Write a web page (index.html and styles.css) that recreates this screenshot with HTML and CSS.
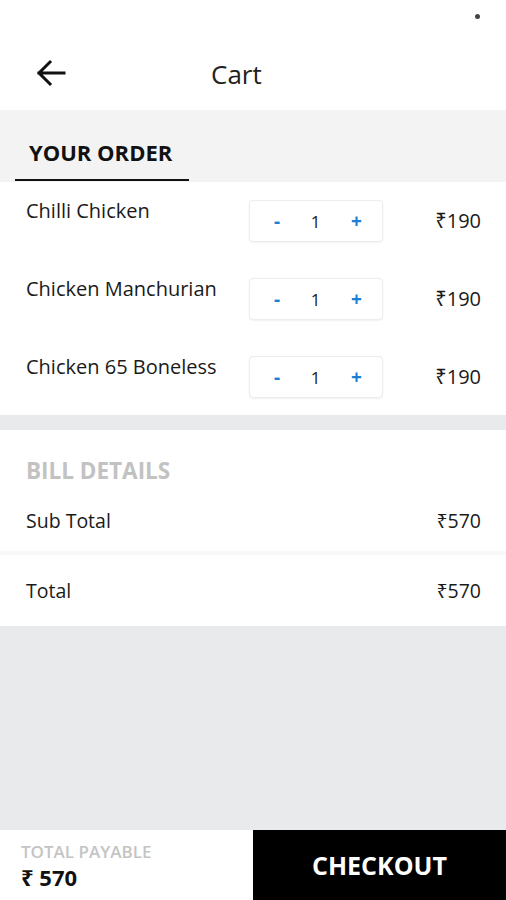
FILE: index.html
```html
<!DOCTYPE html>
<html lang="en">
<head>
    <meta charset="UTF-8">
    <meta name="viewport" content="width=device-width, initial-scale=1.0">
    <title>Cart</title>
    <link rel="stylesheet" href="styles.css">
</head>
<body>

<div class="app">
    <div class="status-bar">
        <span class="status-dot"></span>
    </div>

    <div class="header">
        <svg class="back" width="30" height="28" viewBox="0 0 30 28">
            <path d="M28 14 H3 M14 3 L3 14 L14 25" fill="none" stroke="#111" stroke-width="3" stroke-linecap="square"/>
        </svg>
        <h1 class="title">Cart</h1>
    </div>

    <div class="tabs">
        <div class="tab active">YOUR ORDER</div>
    </div>

    <div class="order">
        <div class="item">
            <div class="item-name">Chilli Chicken</div>
            <div class="stepper">
                <span class="step minus">-</span>
                <span class="qty">1</span>
                <span class="step plus">+</span>
            </div>
            <div class="price">₹190</div>
        </div>
        <div class="item">
            <div class="item-name">Chicken Manchurian</div>
            <div class="stepper">
                <span class="step minus">-</span>
                <span class="qty">1</span>
                <span class="step plus">+</span>
            </div>
            <div class="price">₹190</div>
        </div>
        <div class="item">
            <div class="item-name">Chicken 65 Boneless</div>
            <div class="stepper">
                <span class="step minus">-</span>
                <span class="qty">1</span>
                <span class="step plus">+</span>
            </div>
            <div class="price">₹190</div>
        </div>
    </div>

    <div class="bill">
        <div class="bill-top">
            <h3 class="bill-title">BILL DETAILS</h3>
            <div class="bill-row">
                <span>Sub Total</span>
                <span>₹570</span>
            </div>
        </div>
        <div class="bill-total">
            <div class="bill-row">
                <span>Total</span>
                <span>₹570</span>
            </div>
        </div>
    </div>

    <div class="filler"></div>

    <div class="footer">
        <div class="payable">
            <div class="payable-label">TOTAL PAYABLE</div>
            <div class="payable-amount">₹ 570</div>
        </div>
        <button class="checkout">CHECKOUT</button>
    </div>
</div>

</body>
</html>
```

FILE: styles.css
```css
* {
    box-sizing: border-box;
}
body {
    margin: 0;
    font-family: "Open Sans", "Noto Sans", "DejaVu Sans", sans-serif;
    color: #1a1a1a;
    background: #e8eaeb;
}
.app {
    width: 506px;
    height: 900px;
    display: flex;
    flex-direction: column;
    overflow: hidden;
}
.status-bar {
    height: 34px;
    background: #fff;
    display: flex;
    justify-content: flex-end;
    padding: 14px 26px 0 0;
}
.status-dot {
    width: 5px;
    height: 5px;
    background: #444;
    border-radius: 50%;
}
.header {
    height: 76px;
    background: #fff;
    display: flex;
    align-items: center;
    padding: 2px 0 0 36px;
}
.back {
    display: block;
}
.title {
    margin: 2px 0 0 145px;
    font-size: 26px;
    font-weight: 400;
    color: #222;
}
.tabs {
    height: 72px;
    background: #f3f3f3;
    display: flex;
    align-items: flex-end;
    padding-left: 15px;
}
.tab {
    width: 174px;
    padding: 0 0 12px 14px;
    font-size: 22px;
    font-weight: 700;
    color: #111;
    border-bottom: 2px solid #111;
    margin-bottom: 1px;
}
.order {
    background: #fff;
    padding: 18px 25px 17px 26px;
    display: flex;
    flex-direction: column;
    gap: 36px;
}
.item {
    display: flex;
    align-items: flex-start;
}
.item-name {
    width: 223px;
    font-size: 20px;
    font-weight: 500;
    line-height: 22px;
    color: #1a1a1a;
}
.stepper {
    width: 134px;
    height: 42px;
    border: 1px solid #ececec;
    border-radius: 4px;
    box-shadow: 0 1px 2px rgba(0, 0, 0, 0.06);
    display: flex;
    align-items: center;
    justify-content: space-between;
    padding: 0 20px 0 24px;
}
.step {
    color: #1a7fd4;
    font-weight: 700;
    font-size: 19px;
}
.qty {
    font-size: 17px;
    color: #222;
}
.price {
    flex: 1;
    text-align: right;
    font-size: 20px;
    line-height: 42px;
    color: #1a1a1a;
}
.bill {
    margin-top: 15px;
    background: #fff;
}
.bill-top {
    padding: 26px 25px 17px 26px;
    border-bottom: 4px solid #f8f8f8;
}
.bill-title {
    margin: 0 0 22px;
    font-size: 22.5px;
    font-weight: 700;
    color: #c2c2c2;
    line-height: 30px;
}
.bill-total {
    padding: 23px 25px 22px 26px;
}
.bill-row {
    display: flex;
    justify-content: space-between;
    font-size: 19.5px;
    line-height: 26px;
    color: #1a1a1a;
}
.filler {
    flex: 1;
    background: #e8eaeb;
}
.footer {
    height: 70px;
    display: flex;
}
.payable {
    width: 253px;
    background: #fff;
    padding: 11px 0 0 21px;
}
.payable-label {
    font-size: 17px;
    font-weight: 600;
    color: #c4c4c4;
    line-height: 21px;
}
.payable-amount {
    font-size: 22px;
    font-weight: 700;
    color: #111;
    line-height: 31px;
}
.checkout {
    flex: 1;
    border: none;
    background: #000;
    color: #fff;
    font-family: inherit;
    font-size: 25px;
    font-weight: 700;
    cursor: pointer;
}
```
